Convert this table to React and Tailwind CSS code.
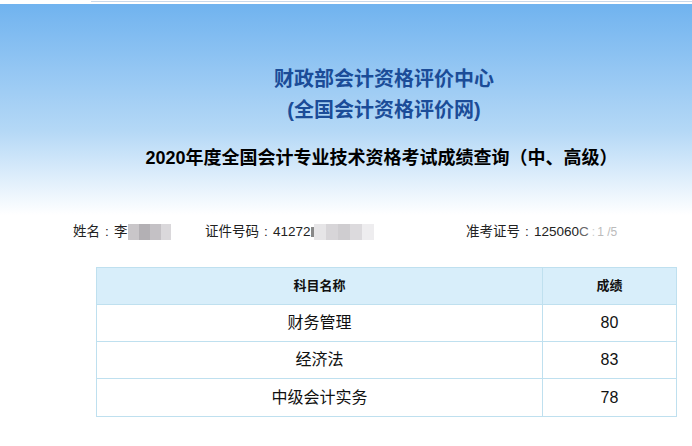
const FONT = { fontFamily: '"Liberation Sans", "Noto Sans CJK SC", sans-serif' };

const SCORES = [
  { name: '财务管理', score: 80 },
  { name: '经济法', score: 83 },
  { name: '中级会计实务', score: 78 },
];

// pixelated mosaic used to hide personal data
function Mosaic({ cells }) {
  return (
    <span className="inline-flex h-[16px] align-middle">
      {cells.map((c, i) => (
        <span key={i} className="h-full" style={{ width: c[0], backgroundColor: c[1] }} />
      ))}
    </span>
  );
}

function Colon() {
  return <span className="inline-block w-[14px] text-center">:</span>;
}

export default function App() {
  return (
    <div className="w-[692px] h-[446px] bg-white overflow-hidden text-[#222]" style={FONT}>
      <div className="h-[4px] bg-white">
        <div className="ml-[91px] h-[2px] border-b border-[#c8d8ea]" />
      </div>

      <div className="h-[211px] bg-gradient-to-b from-[#70b3ef] via-[#b4d8f6] via-60% to-white">
        <div className="pl-[76px] pt-[60px] text-center">
          <div className="text-[20px] leading-[31px] font-bold text-[#1b4c98]">财政部会计资格评价中心</div>
          <div className="text-[20px] leading-[31px] font-bold text-[#1b4c98]">(全国会计资格评价网)</div>
          <div className="mt-[20px] text-[18px] leading-[24px] font-bold text-black pr-[5px]">
            2020年度全国会计专业技术资格考试成绩查询（中、高级）
          </div>
        </div>
      </div>

      <div className="flex items-center pl-[73px] mt-[7px] h-[20px] text-[13.5px] text-[#222]">
        <div className="w-[132px] flex items-center">
          <span>姓名</span>
          <Colon />
          <span>李</span>
          <Mosaic cells={[[11, '#c9c6c9'], [11, '#b3b0b4'], [11, '#c4c1c5'], [10, '#dad8db']]} />
        </div>
        <div className="w-[261px] flex items-center">
          <span>证件号码</span>
          <Colon />
          <span>41272</span>
          <span className="w-[3px] h-[10px] bg-[#888]" />
          <Mosaic cells={[[12, '#e6e5e7'], [12, '#d7d5d8'], [12, '#cfcdd0'], [12, '#dcdadd'], [12, '#eeedef']]} />
        </div>
        <div className="flex items-center">
          <span>准考证号</span>
          <Colon />
          <span>125060</span>
          <span className="text-[#666]">C</span>
          <span className="ml-[3px] text-[#ccc] text-[12px]">:</span>
          <span className="ml-[2px] text-[#bbb] text-[12px]">1 /5</span>
        </div>
      </div>

      <div className="ml-[96px] mt-[25px] w-[581px] border border-[#bfe0ef] text-[#111]">
        <div className="flex h-[37px] bg-[#d8eefa] border-b border-[#bfe0ef] text-[13px] font-bold">
          <div className="w-[446px] flex items-center justify-center border-r border-[#bfe0ef]">科目名称</div>
          <div className="flex-1 flex items-center justify-center">成绩</div>
        </div>
        {SCORES.map((row, i) => (
          <div
            key={row.name}
            className={`flex h-[37px] text-[16px] ${i < SCORES.length - 1 ? 'border-b border-[#bfe0ef]' : ''}`}
          >
            <div className="w-[446px] flex items-center justify-center border-r border-[#bfe0ef]">{row.name}</div>
            <div className="flex-1 flex items-center justify-center">{row.score}</div>
          </div>
        ))}
      </div>
    </div>
  );
}
